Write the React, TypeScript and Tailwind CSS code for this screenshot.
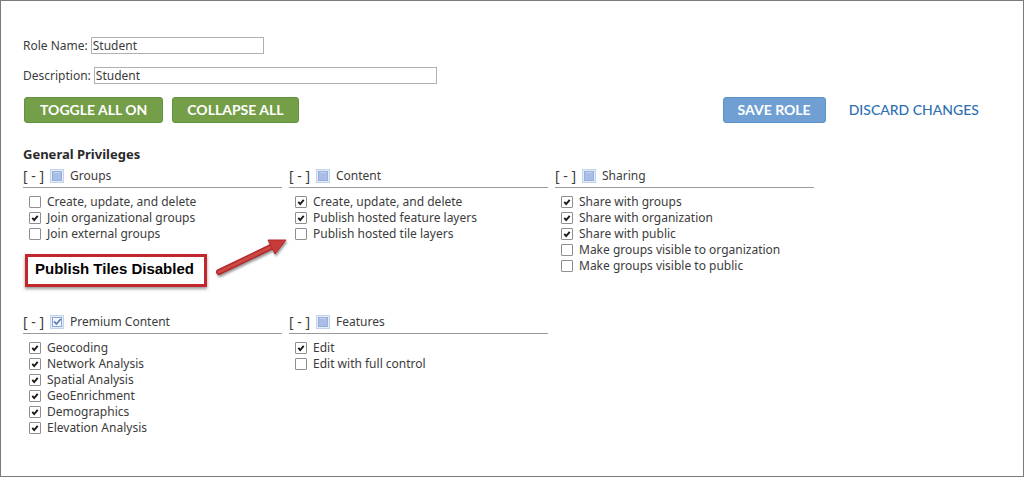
import React, { useState } from 'react';

type Privilege = { name: string; on: boolean };
type Group = { id: string; title: string; items: Privilege[] };

const initialGroups: Group[] = [
  {
    id: 'groups',
    title: 'Groups',
    items: [
      { name: 'Create, update, and delete', on: false },
      { name: 'Join organizational groups', on: true },
      { name: 'Join external groups', on: false },
    ],
  },
  {
    id: 'content',
    title: 'Content',
    items: [
      { name: 'Create, update, and delete', on: true },
      { name: 'Publish hosted feature layers', on: true },
      { name: 'Publish hosted tile layers', on: false },
    ],
  },
  {
    id: 'sharing',
    title: 'Sharing',
    items: [
      { name: 'Share with groups', on: true },
      { name: 'Share with organization', on: true },
      { name: 'Share with public', on: true },
      { name: 'Make groups visible to organization', on: false },
      { name: 'Make groups visible to public', on: false },
    ],
  },
  {
    id: 'premium',
    title: 'Premium Content',
    items: [
      { name: 'Geocoding', on: true },
      { name: 'Network Analysis', on: true },
      { name: 'Spatial Analysis', on: true },
      { name: 'GeoEnrichment', on: true },
      { name: 'Demographics', on: true },
      { name: 'Elevation Analysis', on: true },
    ],
  },
  {
    id: 'features',
    title: 'Features',
    items: [
      { name: 'Edit', on: true },
      { name: 'Edit with full control', on: false },
    ],
  },
];

const PrivilegeRow: React.FC<{ item: Privilege; onToggle: () => void }> = ({ item, onToggle }) => (
  <li>
    <label className="flex h-4 items-center gap-1.5">
      <span className="relative size-3 shrink-0">
        <input
          type="checkbox"
          checked={item.on}
          onChange={onToggle}
          className="block size-3 appearance-none rounded-[1px] border border-[#8f8f8f] bg-white"
        />
        {item.on && (
          <svg viewBox="0 0 12 12" className="pointer-events-none absolute inset-0 size-3">
            <path d="M3.3 5.8 L5.2 8 L8.7 3.8" fill="none" stroke="#1a1a1a" strokeWidth="1.9" />
          </svg>
        )}
      </span>
      <span className="whitespace-nowrap">{item.name}</span>
    </label>
  </li>
);

// Header tick box: ticked when everything is on, filled square when only some are
const GroupCheck: React.FC<{ title: string; all: boolean; onToggle: () => void }> = ({ title, all, onToggle }) => (
  <span className="relative size-[14px] shrink-0">
    <input
      type="checkbox"
      aria-label={title}
      checked={all}
      onChange={onToggle}
      className="block size-[14px] appearance-none border border-[#c3d3ec] bg-[#e3ecf9]"
    />
    <svg viewBox="0 0 14 14" className="pointer-events-none absolute inset-0 size-[14px]">
      {all ? (
        <>
          <rect x="2.5" y="2.5" width="9" height="9" fill="#f4f8fe" stroke="#8ba6d3" />
          <path d="M4 6.4 L6.4 9 L10.8 4" fill="none" stroke="#5b7ab3" strokeWidth="1.7" />
        </>
      ) : (
        <>
          <rect x="2.5" y="2.5" width="9" height="9" fill="#a9bee6" stroke="#98afdc" />
          <path d="M4 3.5 H10" stroke="#c3d2ee" />
        </>
      )}
    </svg>
  </span>
);

export default function App() {
  const [groups, setGroups] = useState(initialGroups);
  const [closed, setClosed] = useState<string[]>([]);
  const [roleName, setRoleName] = useState('Student');
  const [description, setDescription] = useState('Student');

  const setAll = (id: string | null, on: boolean) =>
    setGroups(prev => prev.map(g => (id === null || g.id === id ? { ...g, items: g.items.map(i => ({ ...i, on })) } : g)));

  const toggleItem = (id: string, name: string) =>
    setGroups(prev =>
      prev.map(g => (g.id === id ? { ...g, items: g.items.map(i => (i.name === name ? { ...i, on: !i.on } : i)) } : g))
    );

  const toggleOpen = (id: string) =>
    setClosed(prev => (prev.includes(id) ? prev.filter(c => c !== id) : [...prev, id]));

  return (
    <div className="min-h-screen border border-[#7d7a7b] bg-white pt-9 pr-11 pb-10 pl-[22px] font-['Noto_Sans',Verdana,sans-serif] text-xs leading-4 text-[#3c3c3c]">
      <div className="flex items-center gap-[3px]">
        <label htmlFor="role-name">Role Name:</label>
        <input
          id="role-name"
          value={roleName}
          onChange={e => setRoleName(e.target.value)}
          className="h-[17px] w-[173px] border border-[#b0b0b0] px-px"
        />
      </div>
      <div className="mt-[13px] flex items-center gap-[3px]">
        <label htmlFor="description">Description:</label>
        <input
          id="description"
          value={description}
          onChange={e => setDescription(e.target.value)}
          className="h-[17px] w-[343px] border border-[#b0b0b0] px-px"
        />
      </div>

      <div className="mt-[13px] flex items-center gap-[9px] pl-px font-[Lato,sans-serif] text-sm">
        <button
          onClick={() => setAll(null, true)}
          className="h-[26px] rounded-[3px] border border-[#5f9440] bg-[#759e48] px-[15px] font-bold text-white"
        >
          TOGGLE ALL ON
        </button>
        <button
          onClick={() => setClosed(groups.map(g => g.id))}
          className="h-[26px] rounded-[3px] border border-[#5f9440] bg-[#759e48] px-3.5 font-bold text-white"
        >
          COLLAPSE ALL
        </button>
        <button className="ml-auto h-[26px] rounded-[3px] border border-[#5b93cd] bg-[#70a0d3] px-3.5 font-bold text-white">
          SAVE ROLE
        </button>
        <button className="ml-3.5 font-medium text-[#2e6fb2]">DISCARD CHANGES</button>
      </div>

      <h2 className="mt-[23px] text-[13px] leading-4 font-bold text-[#2a2a2a]">General Privileges</h2>

      <div className="relative mt-1 grid max-w-[791px] grid-cols-3 gap-x-[7px] gap-y-[38px]">
        {groups.map(group => (
          <section key={group.id}>
            <div className="flex h-[22px] items-center gap-1.5 border-b border-[#9a9a9a] pb-0.5">
              <button
                aria-label={`Toggle ${group.title}`}
                onClick={() => toggleOpen(group.id)}
                className="w-[21px] text-left text-sm leading-4 whitespace-nowrap"
              >
                {closed.includes(group.id) ? '[+]' : '[ - ]'}
              </button>
              <GroupCheck
                title={group.title}
                all={group.items.every(i => i.on)}
                onToggle={() => setAll(group.id, !group.items.every(i => i.on))}
              />
              <h3>{group.title}</h3>
            </div>
            {!closed.includes(group.id) && (
              <ul className="pt-1.5 pl-1.5">
                {group.items.map(item => (
                  <PrivilegeRow key={item.name} item={item} onToggle={() => toggleItem(group.id, item.name)} />
                ))}
              </ul>
            )}
          </section>
        ))}

        {/* Callout over the privilege grid */}
        <div className="pointer-events-none absolute top-[88px] left-0.5 flex items-start">
          <p className="flex h-[33px] w-[182px] items-center border-3 border-[#c1272d] bg-white pb-1 pl-[7px] font-['Liberation_Sans',Arial,sans-serif] text-[15px] font-bold whitespace-nowrap text-black shadow-[0_2px_3px_rgba(0,0,0,0.4)]">
            Publish Tiles Disabled
          </p>
          <svg viewBox="0 0 80 44" className="-mt-4 ml-2 h-11 w-20 shrink-0 drop-shadow-[1px_2px_1px_rgba(0,0,0,0.4)]">
            <path d="M4 34 L58 8" stroke="#b5282c" strokeWidth="6" strokeLinecap="round" />
            <path d="M4 34 L58 8" stroke="#cb4a45" strokeWidth="3" strokeLinecap="round" />
            <path d="M53 2 L71 2 L60 16 Z" fill="#c63a38" stroke="#b5282c" />
          </svg>
        </div>
      </div>
    </div>
  );
}
